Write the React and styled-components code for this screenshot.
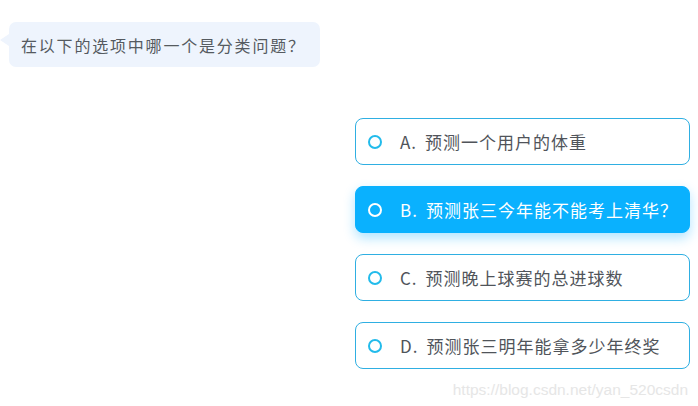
import React from "react";
import styled, { createGlobalStyle } from "styled-components";

const Global = createGlobalStyle`
  html, body { margin: 0; padding: 0; background: #fff; }
  body { font-family: "Microsoft YaHei", "Noto Sans CJK SC", "Liberation Sans", sans-serif; }
`;

const Page = styled.div`
  position: relative;
  width: 698px;
  height: 406px;
  overflow: hidden;
  background: #fff;
  display: flex;
  flex-direction: column;
  padding: 22px 0 0 9px;
  box-sizing: border-box;
`;

const Bubble = styled.div`
  position: relative;
  width: 311px;
  height: 45px;
  box-sizing: border-box;
  background: #eef4fd;
  border-radius: 7px;
  padding-left: 12px;
  display: flex;
  align-items: center;
  font-size: 16px;
  color: #555a60;
  letter-spacing: 1.8px;
  &::before {
    content: "";
    position: absolute;
    left: -9px;
    top: 12px;
    border-top: 6px solid transparent;
    border-bottom: 6px solid transparent;
    border-right: 9px solid #eef4fd;
  }
`;

const Options = styled.div`
  margin: 51px 0 0 346px;
  width: 335px;
  display: flex;
  flex-direction: column;
  gap: 21px;
`;

const Option = styled.div`
  height: 47px;
  box-sizing: border-box;
  border-radius: 8px;
  border: 1px solid ${(p) => (p.$active ? "#0ab1fe" : "#2fafe2")};
  background: ${(p) => (p.$active ? "#0ab1fe" : "#fff")};
  box-shadow: ${(p) => (p.$active ? "0 5px 12px rgba(10,170,254,0.32)" : "none")};
  display: flex;
  align-items: center;
  padding-left: 12px;
  gap: 18px;
  font-size: 17px;
  color: ${(p) => (p.$active ? "#fff" : "#50545a")};
  letter-spacing: 1px;
`;

const Letter = styled.span`
  margin-right: 8px;
`;

const Radio = styled.span`
  width: 14px;
  height: 14px;
  box-sizing: border-box;
  border-radius: 50%;
  border: 2.5px solid ${(p) => (p.$active ? "#fff" : "#22bbeb")};
  flex: none;
`;

const Watermark = styled.div`
  position: absolute;
  right: 10px;
  bottom: 7px;
  font-family: "Liberation Sans", Arial, sans-serif;
  font-size: 15.5px;
  color: #e6e6e6;
`;

const items = [
  ["A.", "预测一个用户的体重"],
  ["B.", "预测张三今年能不能考上清华？"],
  ["C.", "预测晚上球赛的总进球数"],
  ["D.", "预测张三明年能拿多少年终奖"],
];

export default function App() {
  return (
    <>
      <Global />
      <Page>
        <Bubble>在以下的选项中哪一个是分类问题？</Bubble>
        <Options>
          {items.map(([l, t], i) => (
            <Option key={i} $active={i === 1}>
              <Radio $active={i === 1} />
              <span>
                <Letter>{l}</Letter>
                {t}
              </span>
            </Option>
          ))}
        </Options>
        <Watermark>https://blog.csdn.net/yan_520csdn</Watermark>
      </Page>
    </>
  );
}
